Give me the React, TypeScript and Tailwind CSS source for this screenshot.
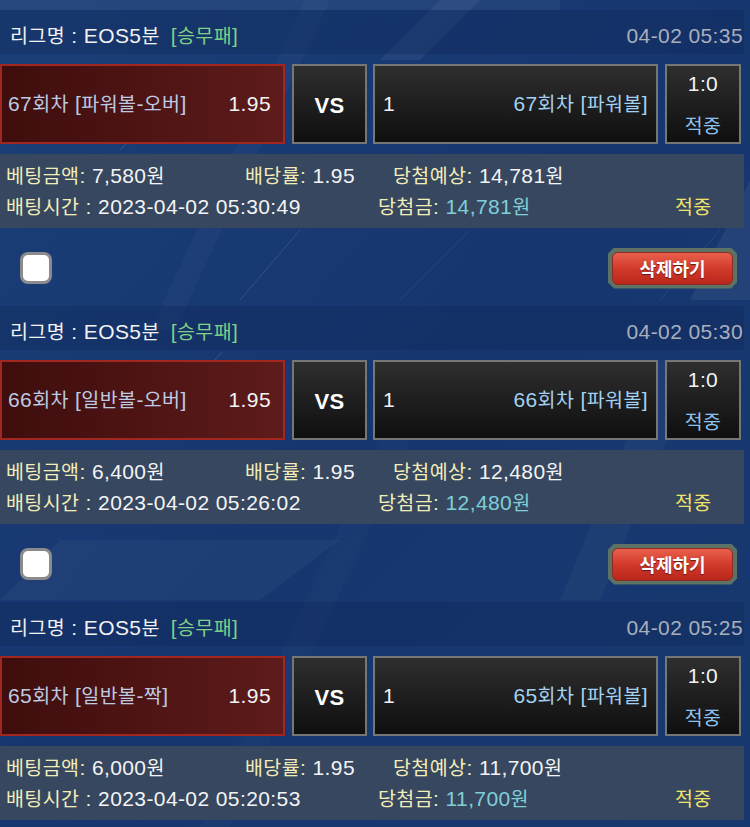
import React from "react";

type Bet = {
  time: string;
  pick: string;
  odds: string;
  right: string;
  amount: string;
  expected: string;
  betTime: string;
  win: string;
  showAction: boolean;
};

const bets: Bet[] = [
  {
    time: "04-02 05:35",
    pick: "67회차 [파워볼-오버]",
    odds: "1.95",
    right: "67회차 [파워볼]",
    amount: "7,580원",
    expected: "14,781원",
    betTime: "2023-04-02 05:30:49",
    win: "14,781원",
    showAction: true,
  },
  {
    time: "04-02 05:30",
    pick: "66회차 [일반볼-오버]",
    odds: "1.95",
    right: "66회차 [파워볼]",
    amount: "6,400원",
    expected: "12,480원",
    betTime: "2023-04-02 05:26:02",
    win: "12,480원",
    showAction: true,
  },
  {
    time: "04-02 05:25",
    pick: "65회차 [일반볼-짝]",
    odds: "1.95",
    right: "65회차 [파워볼]",
    amount: "6,000원",
    expected: "11,700원",
    betTime: "2023-04-02 05:20:53",
    win: "11,700원",
    showAction: false,
  },
];

// Hangul runs are rendered slightly smaller (narrower) than Latin/digit runs
function T({ s }: { s: string }) {
  const parts = s.split(/([\uAC00-\uD7A3]+)/);
  return (
    <>
      {parts.map((p, i) =>
        /[\uAC00-\uD7A3]/.test(p) ? (
          <span key={i} className="text-[19.5px] font-['Noto_Sans_CJK_KR','Liberation_Sans',sans-serif]">
            {p}
          </span>
        ) : (
          <React.Fragment key={i}>{p}</React.Fragment>
        )
      )}
    </>
  );
}

function Background() {
  return (
    <svg
      className="absolute inset-0 pointer-events-none"
      width="750"
      height="827"
      viewBox="0 0 750 827"
    >
      <defs>
        <linearGradient id="bgg" x1="0" y1="0" x2="1" y2="1">
          <stop offset="0" stopColor="#1b3f78" />
          <stop offset="0.5" stopColor="#163670" />
          <stop offset="1" stopColor="#17396f" />
        </linearGradient>
      </defs>
      <rect width="750" height="827" fill="url(#bgg)" />
      <rect width="560" height="10" fill="#ffffff" opacity="0.05" />
      <polygon points="380,60 420,60 480,0 440,0" fill="#ffffff" opacity="0.05" />
      <polygon points="150,330 175,330 330,0 305,0" fill="#ffffff" opacity="0.025" />
      <polygon points="690,300 750,300 750,180" fill="#ffffff" opacity="0.06" />
      <polygon points="0,600 260,600 340,540 60,540" fill="#ffffff" opacity="0.035" />
      <polygon points="560,600 600,600 700,360 660,360" fill="#ffffff" opacity="0.03" />
      <polygon points="200,827 230,827 420,420 390,420" fill="#ffffff" opacity="0.02" />
      <line x1="240" y1="300" x2="300" y2="230" stroke="#ffffff" strokeOpacity="0.12" strokeWidth="1" />
      <line x1="215" y1="360" x2="222" y2="352" stroke="#ffffff" strokeOpacity="0.15" strokeWidth="1" />
      <line x1="400" y1="300" x2="470" y2="230" stroke="#ffffff" strokeOpacity="0.08" strokeWidth="1" />
      <line x1="660" y1="300" x2="720" y2="230" stroke="#ffffff" strokeOpacity="0.08" strokeWidth="1" />
      <line x1="120" y1="150" x2="130" y2="140" stroke="#ffffff" strokeOpacity="0.12" strokeWidth="1" />
    </svg>
  );
}

function BetBlock({ b, first }: { b: Bet; first: boolean }) {
  return (
    <div className={"flex flex-col w-[744px] " + (first ? "mt-[10px]" : "")}>
      {/* header */}
      <div className="h-[44px] pt-[7px] flex items-center justify-between pl-[10px] pr-[1px] bg-[#0c2552]/30">
        <div className="flex items-center">
          <span className="text-[#f2f2f2]">
            <T s="리그명 : EOS5분" />
          </span>
          <span className="ml-[11px] text-[#7fcf84]">
            <T s="[승무패]" />
          </span>
        </div>
        <span className="text-[#a9afbb]">{b.time}</span>
      </div>

      {/* bet row */}
      <div className="mt-[10px] h-[80px] flex">
        <div className="w-[285px] h-full border-2 border-[#a1271f] bg-gradient-to-r from-[#3f0d0d] to-[#5e1b1b] flex items-center justify-between pl-[6px] pr-[12px]">
          <span className="text-[#bccbe2]">
            <T s={b.pick} />
          </span>
          <span className="text-[#f4f4f4]">{b.odds}</span>
        </div>
        <div className="ml-[7px] w-[75px] h-full border-2 border-[#767676] bg-gradient-to-b from-[#2f2f2f] to-[#0f0f0f] flex items-center justify-center">
          <span className="text-white font-bold text-[22px] pt-[2px]">VS</span>
        </div>
        <div className="ml-[6px] w-[285px] h-full border-2 border-[#767676] bg-gradient-to-b from-[#2f2f2f] to-[#0f0f0f] flex items-center justify-between pl-[8px] pr-[8px]">
          <span className="text-[#f2f2f2]">1</span>
          <span className="text-[#a2d1f2]">
            <T s={b.right} />
          </span>
        </div>
        <div className="ml-[7px] w-[76px] h-full border-2 border-[#767676] bg-gradient-to-b from-[#2f2f2f] to-[#0f0f0f] flex flex-col items-center justify-center gap-[19px] pt-[1px]">
          <span className="text-[#f2f2f2] leading-[22px]">1:0</span>
          <span className="text-[#8cc3ee] leading-[22px]">
            <T s="적중" />
          </span>
        </div>
      </div>

      {/* info */}
      <div className="mt-[10px] h-[74px] bg-[#36475f] flex flex-col justify-center pl-[6px] leading-[30px]">
        <div className="flex">
          <span className="w-[239px]">
            <span className="text-[#f3edb7]">
              <T s="베팅금액:" />
            </span>
            <span className="text-[#f4f4f4]">
              {" "}
              <T s={b.amount} />
            </span>
          </span>
          <span className="w-[148px]">
            <span className="text-[#f3edb7]">
              <T s="배당률:" />
            </span>
            <span className="text-[#f4f4f4]"> {b.odds}</span>
          </span>
          <span>
            <span className="text-[#f3edb7]">
              <T s="당첨예상:" />
            </span>
            <span className="text-[#f4f4f4]">
              {" "}
              <T s={b.expected} />
            </span>
          </span>
        </div>
        <div className="flex">
          <span className="w-[372px]">
            <span className="text-[#f3edb7]">
              <T s="배팅시간 :" />
            </span>
            <span className="text-[#f4f4f4]"> {b.betTime}</span>
          </span>
          <span className="w-[297px]">
            <span className="text-[#f3edb7]">
              <T s="당첨금:" />
            </span>
            <span className="text-[#7fcfd9]">
              {" "}
              <T s={b.win} />
            </span>
          </span>
          <span className="text-[#f2e36a]">
            <T s="적중" />
          </span>
        </div>
      </div>

      {/* actions */}
      {b.showAction && (
        <div className="h-[78px] flex items-center justify-between pl-[20px] pr-[7px] pt-[2px]">
          <div className="w-[32px] h-[32px] rounded-[8px] bg-white border-[3px] border-[#8b8b8d]" />
          <div className="w-[129px] h-[41px] bg-[#5d7264] [clip-path:polygon(6px_0,123px_0,129px_6px,129px_35px,123px_41px,6px_41px,0_35px,0_6px)] flex items-center justify-center">
            <div className="w-[121px] h-[33px] rounded-[6px] bg-gradient-to-b from-[#e8604c] via-[#d23a2a] to-[#b8261b] flex items-center justify-center border border-[#8f2a20]">
              <span className="text-white font-bold text-[18px] tracking-normal [text-shadow:0_1px_1px_#6a1510] font-['Noto_Sans_CJK_KR',sans-serif]">
                삭제하기
              </span>
            </div>
          </div>
        </div>
      )}
    </div>
  );
}

export default function App() {
  return (
    <div className="relative w-[750px] h-[827px] overflow-hidden text-[21px] tracking-[0.4px] font-['Liberation_Sans','Noto_Sans_CJK_KR',sans-serif]">
      <Background />
      <div className="relative flex flex-col">
        {bets.map((b, i) => (
          <BetBlock key={i} b={b} first={i === 0} />
        ))}
      </div>
    </div>
  );
}
